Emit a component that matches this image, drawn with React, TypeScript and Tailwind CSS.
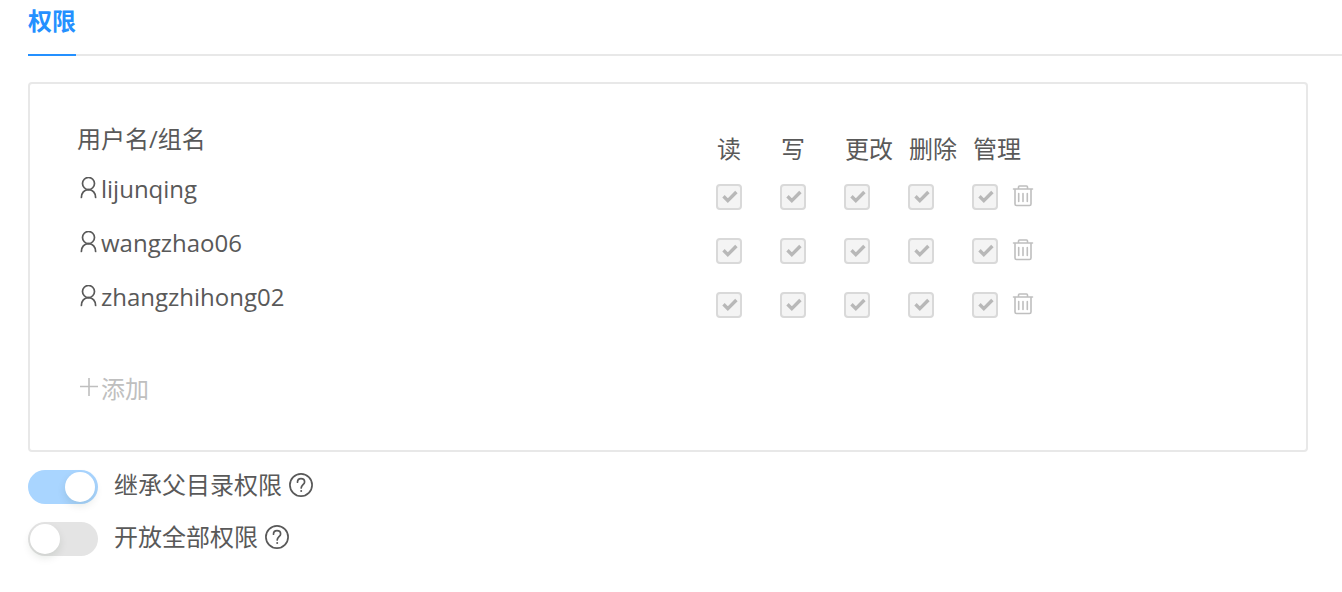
import React from 'react';

interface UserPermission {
  name: string;
  granted: boolean[];
}

const permissionNames = ['读', '写', '更改', '删除', '管理'];

const users: UserPermission[] = [
  { name: 'lijunqing', granted: [true, true, true, true, true] },
  { name: 'wangzhao06', granted: [true, true, true, true, true] },
  { name: 'zhangzhihong02', granted: [true, true, true, true, true] },
];

const UserIcon: React.FC = () => (
  <svg className="w-5 h-6 shrink-0" viewBox="0 0 20 24" fill="none" stroke="currentColor" strokeWidth="1.7" strokeLinecap="round" aria-hidden="true">
    <circle cx="10.5" cy="6.5" r="6" />
    <path d="M3.4 20.5C3.6 16 6.4 13 10.5 12.7C14.6 13 17.4 16 17.6 20.5" />
  </svg>
);

const TrashIcon: React.FC = () => (
  <svg className="w-6 h-6" viewBox="0 0 24 24" fill="none" stroke="currentColor" strokeWidth="1.6" strokeLinecap="round" strokeLinejoin="round" aria-hidden="true">
    <path d="M2.5 5H21.5M7.5 4.5V3Q7.5 2 8.5 2H15.5Q16.5 2 16.5 3V4.5M4 5.5V20Q4 21.5 5.5 21.5H18.5Q20 21.5 20 20V5.5M7.7 9.5V17.5M12 9.5V17.5M16.3 9.5V17.5" />
  </svg>
);

const PlusIcon: React.FC = () => (
  <svg className="w-5 h-5" viewBox="0 0 20 20" fill="none" stroke="currentColor" strokeWidth="1.6" aria-hidden="true">
    <path d="M2 9.5H20M11 1V19" />
  </svg>
);

const HelpIcon: React.FC = () => (
  <svg className="w-6 h-6" viewBox="0 0 24 24" fill="none" stroke="currentColor" strokeWidth="1.7" strokeLinecap="round" aria-hidden="true">
    <circle cx="12" cy="12" r="11.1" />
    <path d="M8.5 9.2C8.5 7 10 5.7 12 5.7S15.6 7 15.6 9C15.6 11.6 12.2 11.9 12.2 15" />
    <circle cx="12.2" cy="18" r="1" fill="currentColor" stroke="none" />
  </svg>
);

const PermissionCheckbox: React.FC<{ label: string; checked: boolean }> = ({ label, checked }) => (
  <span className="grid w-[26px] h-[26px]">
    <input
      type="checkbox"
      aria-label={label}
      defaultChecked={checked}
      disabled
      className="peer col-start-1 row-start-1 w-full h-full appearance-none rounded-[4px] border-2 border-[#d9d9d9] bg-[#f4f4f4]"
    />
    <svg className="col-start-1 row-start-1 w-full h-full invisible peer-checked:visible pointer-events-none" viewBox="0 0 26 26" fill="none" stroke="#b8b8b8" strokeWidth="3.4" aria-hidden="true">
      <path d="M7.5 12.3L11.8 16.6L20.4 8" />
    </svg>
  </span>
);

const Switch: React.FC<{ id: string; defaultChecked?: boolean }> = ({ id, defaultChecked }) => (
  <span className="grid items-center w-[70px] h-[34px]">
    <input
      id={id}
      type="checkbox"
      role="switch"
      defaultChecked={defaultChecked}
      className="peer col-start-1 row-start-1 w-full h-full appearance-none rounded-full bg-[#e4e4e4] checked:bg-[#a9d5ff]"
    />
    <span className="col-start-1 row-start-1 w-[30px] h-[30px] ml-0.5 rounded-full bg-white shadow-[0_4px_8px_rgba(0,35,11,0.1)] peer-checked:ml-[37px] pointer-events-none" />
  </span>
);

const SwitchRow: React.FC<{ id: string; label: string; defaultChecked?: boolean }> = ({ id, label, defaultChecked }) => (
  <div className="flex items-center h-[34px]">
    <Switch id={id} defaultChecked={defaultChecked} />
    <label htmlFor={id} className="ml-4 leading-8 pb-1">{label}</label>
    <button type="button" aria-label={`${label}说明`} className="ml-[7px] pb-1">
      <HelpIcon />
    </button>
  </div>
);

const App: React.FC = () => {
  return (
    <div className="pl-7 pb-8 bg-white text-2xl text-[#595959] font-['Open_Sans','Noto_Sans_CJK_SC',sans-serif]">
      <div role="tablist" className="flex border-b-2 border-[#e8e8e8]">
        <button type="button" role="tab" aria-selected="true" className="-mb-0.5 pt-1 pb-4 border-b-2 border-[#2490ff] font-bold leading-[34px] text-[#2490ff]">
          权限
        </button>
      </div>

      <section className="mt-[26px] mr-[34px] rounded-sm border-2 border-[#e8e8e8]">
        <table className="w-full table-fixed text-left">
          <colgroup>
            <col className="w-1/2" />
            <col className="w-28" />
            <col className="w-16" />
            <col className="w-16" />
            <col className="w-16" />
            <col className="w-[39px]" />
            <col />
          </colgroup>
          <thead>
            <tr className="h-[86px] align-top whitespace-nowrap">
              <th scope="col" className="pl-[47px] pt-[37px] font-normal leading-9">用户名/组名</th>
              {permissionNames.map((name, i) => (
                <th key={name} scope="col" className={`pt-[47px] font-normal leading-9 ${i === 0 ? 'pl-[49px]' : 'pl-px'}`}>
                  {name}
                </th>
              ))}
              <td />
            </tr>
          </thead>
          <tbody>
            {users.map((user) => (
              <tr key={user.name} className="h-[54px]">
                <td className="pl-12 pb-4">
                  <span className="flex items-center gap-[3px] leading-9">
                    <UserIcon />
                    {user.name}
                  </span>
                </td>
                {user.granted.map((checked, i) => (
                  <td key={permissionNames[i]} className={i === 0 ? 'pl-12' : ''}>
                    <PermissionCheckbox label={`${user.name} ${permissionNames[i]}`} checked={checked} />
                  </td>
                ))}
                <td className="pb-0.5">
                  <button type="button" aria-label={`删除 ${user.name}`} disabled className="block text-[#bfbfbf]">
                    <TrashIcon />
                  </button>
                </td>
              </tr>
            ))}
          </tbody>
        </table>
        <button type="button" disabled className="flex items-center gap-[3px] ml-12 mt-[39px] mb-[43px] leading-9 text-[#bfbfbf]">
          <span className="pb-1">
            <PlusIcon />
          </span>
          添加
        </button>
      </section>

      <div className="flex flex-col gap-[18px] mt-[18px]">
        <SwitchRow id="inherit" label="继承父目录权限" defaultChecked />
        <SwitchRow id="open-all" label="开放全部权限" />
      </div>
    </div>
  );
};

export default App;
